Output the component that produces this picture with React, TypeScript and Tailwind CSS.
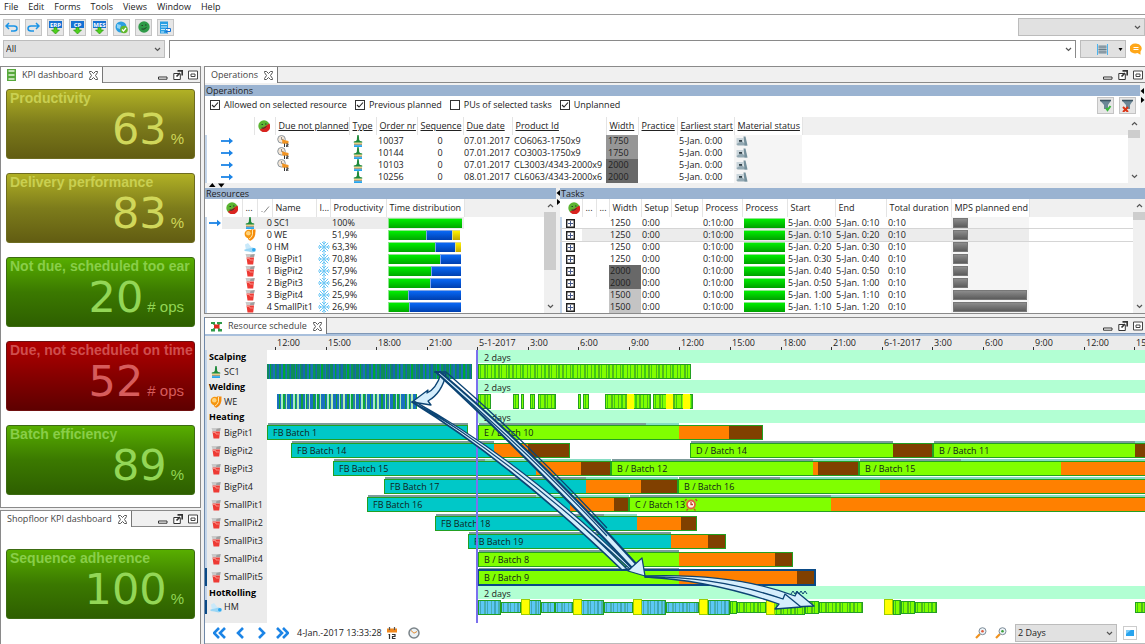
import React from 'react'

const menuItems = ['File', 'Edit', 'Forms', 'Tools', 'Views', 'Window', 'Help']

/* ---------- icons ---------- */

function BrushIcon() {
  return (
    <svg width="12" height="12" viewBox="0 0 12 12" className="block">
      <path d="M5.200 0.300q0.800-0.500 1.600 0l0.400 4.700q0.300 1 3 1.500v1.200h-8.400v-1.200q2.700-0.500 3-1.500z" fill="#1f8a3c" />
      <rect x="2" y="7.700" width="8" height="1.800" fill="#e9cf86" />
      <rect x="2" y="9.200" width="8" height="1" fill="#8a8a78" />
      <rect x="2" y="10.200" width="8" height="1.800" fill="#25a5ee" />
    </svg>
  )
}

function WeldIcon() {
  return (
    <svg width="12" height="12" viewBox="0 0 12 12" className="block">
      <path d="M7 0.500h4.500q0.500 9-5 11.200q-2.500-0.500-3-3.500z" fill="#f58a0b" />
      <circle cx="4.800" cy="5" r="4.200" fill="#f5960f" />
      <circle cx="4.300" cy="4.300" r="2.300" fill="#ffd27a" />
      <path d="M8.500 1v4.500q-0.500 3-3.500 4.500" stroke="#fff1c4" strokeWidth="0.900" fill="none" />
    </svg>
  )
}

function MillIcon() {
  return (
    <svg width="12" height="12" viewBox="0 0 12 12" className="block">
      <path d="M1 3.500l3-1.500l4 5l-1 3l-5-1z" fill="#c9e9fa" />
      <path d="M0.500 8.500q5-1 8-2l3 1v3l-3 1q-4-1.500-8-1.500z" fill="#9ad6f5" />
      <circle cx="9.800" cy="8.800" r="1.800" fill="#2fa8ee" />
    </svg>
  )
}

function PitIcon() {
  return (
    <svg width="12" height="12" viewBox="0 0 12 12" className="block">
      <path d="M1.500 1h9.500l-1 3.500h-7.500z" fill="#c9c9c9" />
      <path d="M6.500 2l4-1l-0.500 3h-4z" fill="#9f9f9f" />
      <path d="M2.500 4.500h7.500l-0.800 7h-5.700z" fill="#ee3a34" />
      <path d="M3 5.500h2.500l0.500 1.500h3" stroke="#f9a198" strokeWidth="0.800" fill="none" />
    </svg>
  )
}

function SnowIcon() {
  return (
    <svg width="12" height="12" viewBox="0 0 12 12" className="block" stroke="#6cc7f5" strokeWidth="1" fill="none">
      <path d="M6 0v12M0 6h12M1.800 1.800l8.400 8.400M10.200 1.800l-8.400 8.400M4 1l2 2l2-2M4 11l2-2l2 2M1 4l2 2l-2 2M11 4l-2 2l2 2" />
    </svg>
  )
}

function FaceIcon({ green = false }: { green?: boolean }) {
  return (
    <svg width="12" height="12" viewBox="0 0 12 12" className="block">
      <circle cx="6" cy="6" r="5.700" fill={green ? '#2f9a48' : '#5cb531'} />
      {!green && <path d="M11.300 3.500a5.700 5.700 0 0 1-9.500 6.300z" fill="#d9231f" />}
      <path d="M3.500 4.500h1.500M7 4h1.500M3.500 8q2.500 1 5-1.500" stroke="#26402a" strokeWidth="1" fill="none" />
    </svg>
  )
}

function ArrowIcon() {
  return (
    <svg width="12" height="12" viewBox="0 0 12 12" className="block">
      <path d="M0 6h9.500" stroke="#1b84e6" strokeWidth="1.800" />
      <path d="M8 2.800l4 3.200l-4 3.200z" fill="#1b84e6" />
    </svg>
  )
}

function DueIcon() {
  return (
    <svg width="12" height="12" viewBox="0 0 12 12" className="block">
      <circle cx="4.500" cy="4.300" r="3.800" fill="#f3e6d8" stroke="#8d979e" strokeWidth="1" />
      <path d="M4.500 2v2.500h2" stroke="#777" strokeWidth="0.800" fill="none" />
      <path d="M5 4.500l6.500 1.500v2.800h-6z" fill="#f29422" />
      <path d="M7.500 8.500v3.500M9.200 9h1.800v1.300h-1.500v1.500h2" stroke="#333" strokeWidth="1" fill="none" />
    </svg>
  )
}

function MaterialIcon() {
  return (
    <svg width="12" height="12" viewBox="0 0 12 12" className="block">
      <path d="M0.500 3h7v7h-7z" fill="#c8d4da" />
      <path d="M0.500 9l5-3l6 4.500h-10z" fill="#94a9b3" />
      <path d="M7.500 1.500h2l2 9h-3z" fill="#75909c" />
      <rect x="3" y="5" width="3" height="1.800" fill="#33424a" />
    </svg>
  )
}

function Calendar() {
  return (
    <svg width="12" height="12" viewBox="0 0 12 12" className="block">
      <rect x="1" y="1.500" width="10" height="4" fill="#f0871c" />
      <path d="M3.500 0v3M8.500 0v3" stroke="#555" strokeWidth="1.200" />
      <path d="M3.500 7v5M2.500 7.500h1M6 7.500h3v2h-2.500v2h3" stroke="#333" strokeWidth="1.200" fill="none" />
    </svg>
  )
}

function Clock() {
  return (
    <svg width="12" height="12" viewBox="0 0 12 12" className="block">
      <circle cx="6" cy="6" r="5" fill="#eaf1f5" stroke="#7b8489" strokeWidth="1.500" />
      <path d="M3 3.500l3 2.700l3-1.700" stroke="#e38a2e" strokeWidth="1" fill="none" />
    </svg>
  )
}

function SortIcon() {
  return (
    <svg width="9" height="9" viewBox="0 0 9 9" className="block" fill="none" stroke="#888">
      <path d="M0.500 7.500h1M3 8.500l5-6" />
    </svg>
  )
}

function Chevron({ up = false }: { up?: boolean }) {
  return (
    <svg width="7" height="5" viewBox="0 0 7 5" className="pointer-events-none block shrink-0" fill="none" stroke="#555" strokeWidth="1.200">
      <path d={up ? 'M1 4l2.500-2.500l2.500 2.500' : 'M1 1l2.500 2.500l2.500-2.500'} />
    </svg>
  )
}

function CloseGlyph() {
  return (
    <svg width="9" height="9" viewBox="0 0 9 9" className="block" fill="none" stroke="#555" strokeWidth="1">
      <path d="M0.500 0.500h2l2 2l2-2h2v1l-2 3l2 3v1h-2l-2-2l-2 2h-2v-1l2-3l-2-3z" />
    </svg>
  )
}

function SplitArrows({ vertical = false }: { vertical?: boolean }) {
  return vertical ? (
    <svg width="6" height="16" viewBox="0 0 6 16" className="block">
      <path d="M4 0v6l-3.500-3z" />
      <path d="M1 9v6l3.500-3z" />
    </svg>
  ) : (
    <svg width="16" height="5" viewBox="0 0 16 5" className="block">
      <path d="M0 4h6.500l-3.200-4z" />
      <path d="M9 0.500h6.500l-3.200 4z" />
    </svg>
  )
}

/* ---------- panel chrome ---------- */

interface PanelHeaderProps {
  title: string
  icon?: React.ReactNode
  blue?: boolean
}

function PanelHeader({ title, icon, blue = false }: PanelHeaderProps) {
  return (
    <div className="flex h-[17px] border-t border-[#8a8a8a] bg-[#f0f0f0]">
      <div className="flex items-center gap-1.5 border-r border-[#777] bg-white pr-1 pl-1.5">
        {icon}
        <span className="text-[#444]">{title}</span>
        <button aria-label={'Close ' + title}><CloseGlyph /></button>
      </div>
      <div className={`flex flex-1 items-center justify-end gap-[5px] border-b pr-0.5 ${blue ? 'border-[#7f97b5]' : 'border-[#8a8a8a]'}`}>
        <button aria-label="Minimize">
          <svg width="10" height="10" viewBox="0 0 10 10" className="block"><path d="M0.500 7h8.500v2.200h-8.500z" fill="#fff" stroke="#333" /></svg>
        </button>
        <button aria-label="Detach">
          <svg width="10" height="10" viewBox="0 0 10 10" className="block" fill="#fff" stroke="#333">
            <path d="M0.800 3.500h6.500v6h-6.500z" />
            <path d="M3.500 6.500l3.500-3.500M4.500 0.800h4.700v4.700" strokeWidth="1.700" />
          </svg>
        </button>
        <button aria-label="Maximize">
          <svg width="10" height="10" viewBox="0 0 10 10" className="block" fill="#fff" stroke="#444"><path d="M0.500 1h9v8h-9z" /><path d="M3 4h4v2.500h-4z" /></svg>
        </button>
      </div>
    </div>
  )
}

function Scrollbar({ thumb }: { thumb: string }) {
  return (
    <div className="flex w-3 shrink-0 flex-col items-center bg-[#f0f0f0] py-1">
      <Chevron up />
      <div className={`mt-1 w-3 bg-[#cdcdcd] ${thumb}`} />
      <div className="flex-1" />
      <Chevron />
    </div>
  )
}

/* ---------- KPI tiles ---------- */

const tones = {
  olive: 'from-[#b1b125] via-[#7d7c1b] to-[#625d12] border-[#6d6c20] text-[#d0d75a]',
  green: 'from-[#58ae00] via-[#3b7900] to-[#2e5f00] border-[#3c6b12] text-[#93d656]',
  red: 'from-[#b20000] via-[#860000] to-[#5e0000] border-[#701010] text-[#d65c5c]',
}

interface KpiTileProps {
  title: string
  value: string
  unit: string
  tone: keyof typeof tones
}

function KpiTile({ title, value, unit, tone }: KpiTileProps) {
  return (
    <div className={`h-[70px] overflow-hidden rounded-[3px] border bg-linear-to-b font-['Liberation_Sans',sans-serif] whitespace-nowrap ${tones[tone]}`}>
      <h2 className="pl-[3px] text-[14px] leading-4 font-bold opacity-85">{title}</h2>
      <p className="flex items-baseline justify-end gap-1 pr-[10px]">
        <span className="font-['DejaVu_Sans',sans-serif] text-[43px] leading-[46px]">{value}</span>
        <span className="text-[15px]">{unit}</span>
      </p>
    </div>
  )
}

/* ---------- tables ---------- */

interface Column {
  label: React.ReactNode
  width: number
}

function TableHead({ columns, underlined = false }: { columns: Column[]; underlined?: boolean }) {
  return (
    <>
      <colgroup>
        {columns.map((c, i) => <col key={i} style={{ width: c.width }} />)}
        <col />
      </colgroup>
      <thead>
        <tr className="h-[18px]">
          {columns.map((c, i) => (
            <th key={i} className={`border-r border-[#e4e4e4] bg-white p-0 pl-[3px] text-left font-normal ${underlined ? 'underline' : ''}`}>
              {c.label}
            </th>
          ))}
          <th className="bg-[#f0f0f0]" />
        </tr>
      </thead>
    </>
  )
}

const operationColumns: Column[] = [
  { label: '', width: 48 },
  { label: <FaceIcon />, width: 21 },
  { label: 'Due not planned', width: 74 },
  { label: 'Type', width: 27 },
  { label: 'Order nr', width: 41 },
  { label: 'Sequence', width: 46 },
  { label: 'Due date', width: 49 },
  { label: 'Product Id', width: 94 },
  { label: 'Width', width: 32 },
  { label: 'Practice', width: 39 },
  { label: 'Earliest start', width: 57 },
  { label: 'Material status', width: 68 },
]

const operations = [
  { due: true, order: '10037', date: '07.01.2017', product: 'CO6063-1750x9', width: '1750' },
  { due: true, order: '10144', date: '07.01.2017', product: 'CO3003-1750x9', width: '1750' },
  { due: true, order: '10103', date: '07.01.2017', product: 'CL3003/4343-2000x9', width: '2000' },
  { due: false, order: '10256', date: '08.01.2017', product: 'CL6063/4343-2000x6', width: '2000' },
]

const widthShade: Record<string, string> = {
  '1250': '',
  '1500': 'bg-[#c4c4c4]',
  '1750': 'bg-[#969696]',
  '2000': 'bg-[#686868]',
}

function OperationsTable() {
  return (
    <table className="w-full table-fixed border-collapse whitespace-nowrap">
      <TableHead columns={operationColumns} underlined />
      <tbody>
        {operations.map((o) => (
          <tr key={o.order} className="h-3 *:p-0">
            <td className="border-l-2 border-[#c3d5ea]"><div className="pl-3.5"><ArrowIcon /></div></td>
            <td />
            <td><div className="pl-0.5">{o.due && <DueIcon />}</div></td>
            <td><div className="pl-[3px]"><BrushIcon /></div></td>
            <td><div className="pl-0.5">{o.order}</div></td>
            <td className="text-center">0</td>
            <td><div className="pl-px">{o.date}</div></td>
            <td><div className="pl-0.5">{o.product}</div></td>
            <td className={widthShade[o.width]}><div className="pl-0.5">{o.width}</div></td>
            <td />
            <td><div className="pl-0.5">5-Jan. 0:00</div></td>
            <td className="bg-[#f5f5f5]"><div className="pl-0.5"><MaterialIcon /></div></td>
            <td />
          </tr>
        ))}
      </tbody>
    </table>
  )
}

const resourceColumns: Column[] = [
  { label: '', width: 16 },
  { label: <FaceIcon />, width: 20 },
  { label: '...', width: 15 },
  { label: <SortIcon />, width: 15 },
  { label: 'Name', width: 44 },
  { label: 'I...', width: 14 },
  { label: 'Productivity', width: 56 },
  { label: 'Time distribution', width: 78 },
]

const resources = [
  { icon: <BrushIcon />, nr: 0, name: 'SC1', snow: false, productivity: '100%', bars: [74, 0, 0] },
  { icon: <WeldIcon />, nr: 0, name: 'WE', snow: false, productivity: '51,9%', bars: [38, 26, 8] },
  { icon: <MillIcon />, nr: 0, name: 'HM', snow: true, productivity: '63,3%', bars: [47, 20, 6] },
  { icon: <PitIcon />, nr: 0, name: 'BigPit1', snow: true, productivity: '70,8%', bars: [52, 21, 0] },
  { icon: <PitIcon />, nr: 1, name: 'BigPit2', snow: true, productivity: '57,9%', bars: [43, 30, 0] },
  { icon: <PitIcon />, nr: 2, name: 'BigPit3', snow: true, productivity: '56,2%', bars: [42, 31, 0] },
  { icon: <PitIcon />, nr: 3, name: 'BigPit4', snow: true, productivity: '25,9%', bars: [20, 53, 0] },
  { icon: <PitIcon />, nr: 4, name: 'SmallPit1', snow: true, productivity: '26,9%', bars: [21, 52, 0] },
]

const barTones = [
  'bg-linear-to-b from-[#00ee00] to-[#00a800] border-[#8de58d]',
  'bg-linear-to-b from-[#0a68f5] to-[#003fb0] border-[#7fa5e5]',
  'bg-linear-to-b from-[#fff200] to-[#c4a800] border-[#e5dd7f]',
]

function ResourcesTable() {
  return (
    <table className="w-full table-fixed border-collapse whitespace-nowrap">
      <TableHead columns={resourceColumns} />
      <tbody>
        {resources.map((r, i) => (
          <tr key={r.name} className={`h-3 *:p-0 ${i === 0 ? 'bg-[#ececec]' : ''}`}>
            <td className="border-l-2 border-[#c3d5ea] bg-white">{i === 0 && <div className="pl-0.5"><ArrowIcon /></div>}</td>
            <td />
            <td><div className="pl-0.5">{r.icon}</div></td>
            <td className="text-right">{r.nr}</td>
            <td><div className="pl-0.5">{r.name}</div></td>
            <td><div className="pl-0.5">{r.snow && <SnowIcon />}</div></td>
            <td><div className="pl-0.5">{r.productivity}</div></td>
            <td>
              <div className="flex pl-0.5">
                {r.bars.map((w, b) => w > 0 && (
                  <div key={b} className={`h-2.5 border-t border-l ${barTones[b]}`} style={{ width: w }} />
                ))}
              </div>
            </td>
            <td className="bg-white" />
          </tr>
        ))}
      </tbody>
    </table>
  )
}

const taskColumns: Column[] = [
  { label: <div className="pl-1"><FaceIcon /></div>, width: 21 },
  { label: '...', width: 14 },
  { label: '...', width: 13 },
  { label: 'Width', width: 32 },
  { label: 'Setup', width: 30 },
  { label: 'Setup', width: 31 },
  { label: 'Process', width: 40 },
  { label: 'Process', width: 45 },
  { label: 'Start', width: 48 },
  { label: 'End', width: 51 },
  { label: 'Total duration', width: 65 },
  { label: 'MPS planned end', width: 78 },
]

const tasks = [
  { width: '1250', start: '0:00', end: '0:10', mps: 15 },
  { width: '1250', start: '0:10', end: '0:20', mps: 15 },
  { width: '1250', start: '0:20', end: '0:30', mps: 15 },
  { width: '1250', start: '0:30', end: '0:40', mps: 15 },
  { width: '2000', start: '0:40', end: '0:50', mps: 15 },
  { width: '2000', start: '0:50', end: '1:00', mps: 15 },
  { width: '1500', start: '1:00', end: '1:10', mps: 74 },
  { width: '1500', start: '1:10', end: '1:20', mps: 74 },
]

function TasksTable() {
  return (
    <table className="w-full table-fixed border-collapse whitespace-nowrap">
      <TableHead columns={taskColumns} />
      <tbody>
        {tasks.map((t, i) => (
          <tr key={t.start} className={`h-3 *:p-0 ${i === 1 ? 'bg-[#ececec] outline outline-[#d5d5d5]' : ''}`}>
            <td className="border-l-2 border-[#c3d5ea] bg-white">
              <button aria-label={'Expand task ' + t.start} className="ml-1 block">
                <svg width="9" height="9" viewBox="0 0 9 9" className="block"><path d="M0.700 0.700h7.600v7.600h-7.600z" fill="#fff" stroke="#222" strokeWidth="1.400" /><path d="M2 4.500h5M4.500 2v5" stroke="#44588a" /></svg>
              </button>
            </td>
            <td />
            <td />
            <td className={widthShade[t.width]}><div className="pl-px">{t.width}</div></td>
            <td><div className="pl-px">0:00</div></td>
            <td />
            <td><div className="pl-px">0:10:00</div></td>
            <td><div className="mr-0.5 ml-0.5 h-2.5 border-t border-[#8de58d] bg-linear-to-b from-[#00ee00] to-[#00a000]" /></td>
            <td><div className="pl-px">5-Jan. {t.start}</div></td>
            <td><div className="pl-px">5-Jan. {t.end}</div></td>
            <td><div className="pl-0.5">0:10</div></td>
            <td className={i === 1 ? '' : 'bg-[#f5f5f5]'}>
              <div className="ml-0.5 h-2.5 border border-[#777] bg-linear-to-b from-[#8c8c8c] to-[#5c5c5c]" style={{ width: t.mps }} />
            </td>
            <td className="bg-white" />
          </tr>
        ))}
      </tbody>
    </table>
  )
}

/* ---------- schedule ---------- */

const TEAL = '#00c8c8'
const GREEN = '#80ff00'
const ORANGE = '#ff8000'
const BROWN = '#804000'
const EDGE = '#22a022'

const scheduleRows = [
  { name: 'Scalping', group: true, h: 'h-[13px]' },
  { name: 'SC1', icon: <BrushIcon />, h: 'h-[17px]' },
  { name: 'Welding', group: true, h: 'h-[13px]' },
  { name: 'WE', icon: <WeldIcon />, h: 'h-[17px]' },
  { name: 'Heating', group: true, h: 'h-[14px]' },
  { name: 'BigPit1', icon: <PitIcon />, h: 'h-[18px]' },
  { name: 'BigPit2', icon: <PitIcon />, h: 'h-[18px]' },
  { name: 'BigPit3', icon: <PitIcon />, h: 'h-[18px]' },
  { name: 'BigPit4', icon: <PitIcon />, h: 'h-[18px]' },
  { name: 'SmallPit1', icon: <PitIcon />, h: 'h-[18px]' },
  { name: 'SmallPit2', icon: <PitIcon />, h: 'h-[18px]' },
  { name: 'SmallPit3', icon: <PitIcon />, h: 'h-[18px]' },
  { name: 'SmallPit4', icon: <PitIcon />, h: 'h-[18px]' },
  { name: 'SmallPit5', icon: <PitIcon />, h: 'h-[18px]', selected: true },
  { name: 'HotRolling', group: true, h: 'h-[14px]' },
  { name: 'HM', icon: <MillIcon />, h: 'h-[14px]', selected: true },
]

const ticks = [
  '12:00', '15:00', '18:00', '21:00', '5-1-2017', '3:00', '6:00', '9:00', '12:00',
  '15:00', '18:00', '21:00', '6-1-2017', '3:00', '6:00', '9:00', '12:00', '15:00',
]

interface Batch {
  y: number
  x: number
  label?: string
  // end position and colour of every phase
  phases: [number, string][]
  // queue strip drawn above the bar: end of the dark and of the light part
  strip?: [number, number]
}

const batches: Batch[] = [
  { y: 89, x: 0, label: 'FB Batch 1', phases: [[201, TEAL]], strip: [201, 201] },
  { y: 89, x: 211, label: 'E / Batch 10', phases: [[412, GREEN], [462, ORANGE], [496, BROWN]], strip: [379, 412] },
  { y: 107, x: 24, label: 'FB Batch 14', phases: [[227, TEAL], [261, ORANGE], [303, BROWN]], strip: [227, 227] },
  { y: 107, x: 423, label: 'D / Batch 14', phases: [[626, GREEN], [666, BROWN]], strip: [626, 626] },
  { y: 107, x: 666, label: 'B / Batch 11', phases: [[868, GREEN], [1400, BROWN]], strip: [868, 1400] },
  { y: 125, x: 66, label: 'FB Batch 15', phases: [[269, TEAL], [314, ORANGE], [344, BROWN]], strip: [218, 344] },
  { y: 125, x: 344, label: 'B / Batch 12', phases: [[546, GREEN], [551, ORANGE], [592, BROWN]], strip: [546, 592] },
  { y: 125, x: 592, label: 'B / Batch 15', phases: [[794, GREEN], [1400, ORANGE]], strip: [694, 1400] },
  { y: 143, x: 117, label: 'FB Batch 17', phases: [[319, TEAL], [374, ORANGE], [411, BROWN]], strip: [319, 411] },
  { y: 143, x: 411, label: 'B / Batch 16', phases: [[613, GREEN], [1400, ORANGE]], strip: [513, 1400] },
  { y: 161, x: 100, label: 'FB Batch 16', phases: [[303, TEAL], [347, ORANGE], [362, BROWN]], strip: [269, 362] },
  { y: 161, x: 362, label: 'C / Batch 13', phases: [[564, GREEN], [1400, ORANGE]], strip: [564, 1400] },
  { y: 180, x: 168, label: 'FB Batch 18', phases: [[370, TEAL], [414, ORANGE], [430, BROWN]], strip: [337, 370] },
  { y: 198, x: 201, label: 'FB Batch 19', phases: [[404, TEAL], [441, ORANGE], [459, BROWN]], strip: [404, 404] },
  { y: 216, x: 211, label: 'B / Batch 8', phases: [[412, GREEN], [508, ORANGE], [526, BROWN]], strip: [412, 412] },
  { y: 234, x: 211, label: 'B / Batch 9', phases: [[412, GREEN], [530, ORANGE], [548, BROWN]], strip: [412, 412] },
]

function BatchBar({ batch }: { batch: Batch }) {
  const { x, y, phases, label, strip } = batch
  const end = phases[phases.length - 1][0]
  return (
    <g>
      {strip && <rect x={x + 1} y={y - 2} width={strip[0] - x - 1} height="2" fill="#7d9c9c" />}
      {strip && <rect x={strip[0]} y={y - 2} width={strip[1] - strip[0]} height="2" fill="#86dcc4" />}
      {phases.map(([stop, color], i) => {
        const from = i === 0 ? x : phases[i - 1][0]
        return <rect key={stop} x={from} y={y} width={stop - from} height="15" fill={color} />
      })}
      <rect x={x + 0.5} y={y + 0.5} width={end - x - 1} height="14" fill="none" stroke={EDGE} />
      <text x={x + 6} y={y + 11} fill="#10241a">{label}</text>
    </g>
  )
}

interface StripesProps {
  x: number
  end: number
  y: number
  h: number
  colors: string[]
  outline?: boolean
}

// many short operations side by side, each one a thin vertical stripe
function Stripes({ x, end, y, h, colors, outline = true }: StripesProps) {
  const parts = []
  let pos = x
  let i = 0
  while (pos < end) {
    const w = Math.min([2, 1, 2, 1, 1, 2, 1][(i * 3) % 7], end - pos)
    parts.push(<rect key={i} x={pos} y={y} width={w} height={h} fill={colors[i % colors.length]} />)
    pos += w
    i++
  }
  return (
    <g>
      {parts}
      {outline && <rect x={x + 0.5} y={y + 0.5} width={end - x - 1} height={h - 1} fill="none" stroke={EDGE} />}
    </g>
  )
}

const LIME = ['#80ff00', '#3fc814', '#80ff00', '#80ff00', '#4fb81c']
const BLUES = ['#0e8a5c', '#1a70b8', '#00a834', '#157a8a', '#1a70b8', '#0a9a50', '#13787c', '#1668b0', '#0c8f58']
const WELDS = ['#1a70c0', '#12a03a', '#1a70c0', '#a8ecc4', '#0aa83c', '#2a78b0', '#b4f0b0', '#1a70c0']
const SKY = ['#5cc8f5', '#3fa6b8', '#5cc8f5', '#5cc8f5', '#48b0b0']

const lateWelds = [[211, 224], [246, 252], [254, 257], [263, 268], [271, 289], [311, 314], [316, 322], [338, 384], [386, 426]]
const rolling: [number, number, number, string[]][] = [
  [211, 234, 15, SKY], [234, 254, 11, SKY], [262, 274, 15, SKY], [274, 288, 11, SKY], [288, 306, 11, SKY],
  [314, 337, 15, SKY], [337, 366, 11, SKY], [374, 399, 15, SKY], [399, 432, 11, SKY], [441, 463, 15, SKY],
  [463, 470, 13, LIME], [470, 499, 11, LIME], [507, 538, 15, LIME], [538, 552, 13, LIME], [552, 596, 11, LIME],
  [626, 634, 15, LIME], [634, 648, 13, LIME], [648, 670, 11, LIME], [868, 900, 11, LIME],
]
const yellows = [254, 306, 366, 432, 499, 617]

function ScheduleChart() {
  return (
    <svg width="100%" height="287" className="block text-[9px]" fill="#222" role="img" aria-label="Resource schedule">
      <rect width="100%" height="14" fill="#ebebeb" />
      {ticks.map((t, i) => {
        const x = Math.round(8 + i * 50.55)
        return (
          <g key={i}>
            <rect x={x} y="11" width="1" height="3" fill="#333" />
            <text x={x + 2} y="10">{t}</text>
          </g>
        )
      })}
      {[14, 44, 74, 250].map((y) => (
        <g key={y}>
          <rect x="211" y={y} width="100%" height="13" fill="#b2ffd3" />
          <text x="217" y={y + 11}>2 days</text>
        </g>
      ))}

      <Stripes x={0} end={205} y={28} h={15} colors={BLUES} outline={false} />
      <Stripes x={211} end={424} y={28} h={15} colors={LIME} />
      <Stripes x={10} end={150} y={58} h={15} colors={WELDS} outline={false} />
      {lateWelds.map(([a, b]) => <Stripes key={a} x={a} end={b} y={58} h={15} colors={LIME} />)}
      {[360, 399, 416].map((x) => <rect key={x} x={x} y="58" width="7" height="15" fill="#ffff00" />)}

      {batches.map((b) => <BatchBar key={b.x + '-' + b.y} batch={b} />)}
      <rect x="211" y="234" width="337" height="15" fill="none" stroke="#0b4a86" strokeWidth="2" />
      <g>
        <circle cx="424" cy="168.500" r="4" fill="#fdf5ec" stroke="#e0603c" strokeWidth="1.800" />
        <path d="M424 166v2.500h2M419.500 163l-1.500 2M428.500 163l1.500 2M421 173l-1.500 1.500M427 173l1.500 1.500" stroke="#c0452c" strokeWidth="1.300" fill="none" />
      </g>

      {rolling.map(([a, b, h, colors]) => (
        <Stripes key={a} x={a} end={b} y={Math.round(271 - h / 2)} h={h} colors={colors} />
      ))}
      {yellows.map((x) => (
        <rect key={x} x={x + 0.5} y="263.500" width="8" height="15" fill="#ffff00" stroke="#9ccc00" />
      ))}

      <rect x="209" y="14" width="2" height="273" fill="#7b70ee" />

      {/* material flow of the selected order */}
      <g fill="#d5eefc" stroke="#0c4474" strokeWidth="1.300" strokeLinejoin="round">
        <path d="M174 38q-5 15-14 19l1-3l-16 12l19 3l-3-4q14-8 18-27z" />
        <path d="M145 66Q248 120 360 233l-5 1Q243 126 145 66z" strokeWidth="1.600" />
        <path d="M147 65Q254 124 366 233l-2 1Q248 126 147 65z" strokeWidth="1.200" />
        <path d="M169 36l4 0Q268 116 371 230l-5 3Q262 122 169 36z" strokeWidth="2.200" />
        <path d="M167 36h12Q262 108 340 192" fill="none" strokeWidth="1.300" />
        <path d="M171 38Q266 120 340 200" fill="none" strokeWidth="1.200" />
        <path d="M365 231l10-9l3 18l-17-5z" />
        <path d="M378 240q90-3 150 20l2-4l17 14l-21 1l2-3q-60-24-150-27z" />
        <path d="M378 241q70-1 138 22l2-5l16 13l-26 2l4-5q-70-24-134-27z" />
      </g>
      <path d="M524 258l2-3l2 3l2-3l2 3l2-3l2 3l2-3l2 3" fill="none" stroke="#0c4474" />
    </svg>
  )
}

function SchedulePanel() {
  return (
    <section className="flex flex-1 flex-col border-l border-[#6f88a8] bg-white">
      <PanelHeader
        blue
        title="Resource schedule"
        icon={
          <svg width="11" height="11" viewBox="0 0 11 11" className="block">
            <path d="M0 1h4v2h-4zM6 1h5v2h-5zM0 8h4v2.500h-4zM7 8h4v2.500h-4z" fill="#2f9a48" />
            <path d="M1.500 2l8 7M9.500 2l-8 7" stroke="#2f9a48" strokeWidth="1.200" />
            <path d="M3 3.500h5.500v4h-5.500z" fill="#e02a20" />
          </svg>
        }
      />
      <div className="flex border-t-2 border-[#a9c0dc]">
        <div className="w-[62px] shrink-0 bg-[#ebebeb] pt-[14px]">
          {scheduleRows.map((r) => (
            <div
              key={r.name}
              className={`flex items-center border-l-2 ${r.h} ${r.selected ? 'border-[#0b4a86]' : 'border-[#c3d5ea]'} ${r.group ? 'pl-0.5 font-bold text-black' : 'gap-0.5 pl-[3px]'}`}
            >
              {r.icon && <span className="shrink-0">{r.icon}</span>}
              <span>{r.name}</span>
            </div>
          ))}
        </div>
        <div className="min-w-0 flex-1 overflow-hidden"><ScheduleChart /></div>
      </div>
      <footer className="flex flex-1 items-center border-b border-[#bbb] pr-1 pl-2">
        {['M6 1l-5 5l5 5M12 1l-5 5l5 5', 'M9 1l-5 5l5 5', 'M4 1l5 5l-5 5', 'M1 1l5 5l-5 5M7 1l5 5l-5 5'].map((d, i) => (
          <button key={d} aria-label={['Far back', 'Back', 'Forward', 'Far forward'][i]} className="mr-2">
            <svg width="13" height="12" viewBox="0 0 13 12" className="block" fill="none" stroke="#1b84e6" strokeWidth="2.600"><path d={d} /></svg>
          </button>
        ))}
        <span>4-Jan.-2017 13:33:28</span>
        <button aria-label="Pick date" className="ml-1"><Calendar /></button>
        <button aria-label="Pick time" className="ml-2.5"><Clock /></button>
        <div className="flex-1" />
        {['#e05a3c', '#3ca03c'].map((c) => (
          <button key={c} aria-label="Zoom" className="mr-2">
            <svg width="12" height="12" viewBox="0 0 12 12" className="block" fill="none">
              <path d="M1 11l4-4" stroke="#f0921e" strokeWidth="2.200" />
              <circle cx="7.500" cy="4.200" r="3.500" fill="#eef4f8" stroke="#7d8c98" strokeWidth="1" />
              <circle cx="7.500" cy="4.200" r="1.300" fill={c} />
            </svg>
          </button>
        ))}
        <div className="grid w-[102px] items-center *:col-start-1 *:row-start-1">
          <select aria-label="Visible period" className="h-[18px] appearance-none border border-[#bcbcbc] bg-[#e1e1e1] pl-0.5">
            <option>2 Days</option>
          </select>
          <span className="mr-1 justify-self-end"><Chevron /></span>
        </div>
        <button aria-label="Fit" className="mr-1 ml-1.5 border border-[#ccc] bg-white p-0.5">
          <svg width="8" height="8" viewBox="0 0 8 8" className="block"><path d="M0 1h8v6h-8z" fill="#29a4ee" /><path d="M0 5l5-4h-5z" fill="#7cccf8" /></svg>
        </button>
      </footer>
    </section>
  )
}

/* ---------- toolbar ---------- */

function ImportIcon({ label }: { label: string }) {
  return (
    <svg width="13" height="13" viewBox="0 0 13 13" className="block">
      <rect x="0" y="0" width="13" height="7" fill="#1672d4" />
      <text x="6.500" y="6" fontSize="6" fontWeight="bold" fill="#fff" textAnchor="middle">{label}</text>
      <path d="M5 6.500h3v2.500h2.500l-4 4l-4-4h2.500z" fill="#4fd01c" stroke="#238a10" strokeWidth="0.600" />
    </svg>
  )
}

const tools = [
  { name: 'Undo', icon: <svg width="13" height="13" viewBox="0 0 13 13" fill="none" stroke="#1b94e6" strokeWidth="1.500"><path d="M4 2l-3 3l3 3M1 5h8q3 0 3 2.500t-3 2.500h-3" /></svg> },
  { name: 'Redo', icon: <svg width="13" height="13" viewBox="0 0 13 13" fill="none" stroke="#1b94e6" strokeWidth="1.500"><path d="M9 2l3 3l-3 3M12 5h-8q-3 0-3 2.500t3 2.500h3" /></svg> },
  { name: 'Import ERP', icon: <ImportIcon label="ERP" /> },
  { name: 'Import CP', icon: <ImportIcon label="CP" /> },
  { name: 'Import MES', icon: <ImportIcon label="MES" /> },
  { name: 'Check', icon: <svg width="13" height="13" viewBox="0 0 13 13"><circle cx="6" cy="6" r="5.500" fill="#2a9fe2" /><path d="M2 3l4 1l-1 4l-3-1z" fill="#8fd3f5" /><circle cx="9" cy="8.500" r="3.800" fill="#62b82e" /><path d="M7 8.500l1.500 1.500l2.500-3" stroke="#fff" strokeWidth="1.200" fill="none" /></svg> },
  { name: 'Status', icon: <FaceIcon green /> },
  { name: 'Report', icon: <svg width="13" height="13" viewBox="0 0 13 13"><path d="M1 0.500h8v12h-8z" fill="#2a9fe2" /><path d="M2 3.500h6M2 6h6M2 8.500h4M2 11h3" stroke="#c7e8fb" /><path d="M7 7.500h4.500v3h-4.500M8.500 9l-2 1.500l2 1.500" stroke="#1672d4" fill="#fff" /></svg> },
]

function Toolbar() {
  return (
    <>
      <div className="flex items-center gap-[5px] pt-[3px] pl-[3px]">
        {tools.map((t) => (
          <button key={t.name} aria-label={t.name} className="flex size-[17px] items-center justify-center border border-[#c4c4c4] bg-[#e6e6e6]">
            {t.icon}
          </button>
        ))}
        <div className="ml-auto grid w-[127px] items-center *:col-start-1 *:row-start-1">
          <select aria-label="Scenario" className="h-[18px] w-full appearance-none border border-[#bcbcbc] bg-[#e1e1e1]" />
          <span className="mr-1 justify-self-end"><Chevron /></span>
        </div>
      </div>
      <div className="flex items-center gap-1 pt-1 pr-[3px] pb-2 pl-[3px]">
        <div className="grid w-[162px] items-center *:col-start-1 *:row-start-1">
          <select aria-label="Filter scope" className="h-[18px] appearance-none border border-[#bcbcbc] bg-[#e1e1e1] pl-0.5">
            <option>All</option>
          </select>
          <span className="mr-1 justify-self-end"><Chevron /></span>
        </div>
        <div className="grid flex-1 items-center *:col-start-1 *:row-start-1">
          <input aria-label="Filter" className="h-[18px] border border-b-0 border-[#8a8a8a] bg-white px-1" />
          <span className="mr-1 justify-self-end"><Chevron /></span>
        </div>
        <button aria-label="Layout" className="flex h-[18px] w-[46px] items-center justify-end gap-2.5 border border-[#bcbcbc] bg-[#e1e1e1] pr-0.5">
          <svg width="11" height="11" viewBox="0 0 11 11"><path d="M0.500 0v11M10.500 0v11" stroke="#4cb4ee" /><path d="M1.500 1h8v9h-8z" fill="#a8b6be" /><path d="M1.500 3h8M1.500 5.500h8M1.500 8h8" stroke="#6c7f8a" /></svg>
          <svg width="5" height="3" viewBox="0 0 5 3"><path d="M0.500 0h4l-2 3z" /></svg>
        </button>
        <button aria-label="Messages">
          <svg width="12" height="12" viewBox="0 0 12 12" className="block"><path d="M6 0.500a5.700 5 0 0 1 4.500 8v3.300l-3-1.800a5.700 5 0 1 1-1.500-9.500z" fill="#ffa71a" /><path d="M3.500 4.500h5M3.500 6.500h5" stroke="#fff" strokeWidth="1" /></svg>
        </button>
      </div>
    </>
  )
}

/* ---------- operations ---------- */

const filters = [
  { id: 'allowed', label: 'Allowed on selected resource', on: true },
  { id: 'previous', label: 'Previous planned', on: true },
  { id: 'pus', label: 'PUs of selected tasks', on: false },
  { id: 'unplanned', label: 'Unplanned', on: true },
]

function Band({ title }: { title: string }) {
  return <h3 className="h-[11px] bg-[#9ab3d1] pl-px leading-[11px]">{title}</h3>
}

function OperationsPanel() {
  return (
    <section className="border-b border-l border-[#8a8a8a] bg-[#f0f0f0]">
      <PanelHeader title="Operations" />
      <div className="flex pt-0.5">
        <div className="min-w-0 flex-1">
          <Band title="Operations" />
          <div className="flex h-[21px] items-center gap-2 bg-white pr-1 pb-[3px] pl-[5px]">
            {filters.map((f) => (
              <div key={f.id} className="flex items-center gap-1">
                <span className="grid *:col-start-1 *:row-start-1">
                  <input id={f.id} type="checkbox" defaultChecked={f.on} className="peer size-[10px] appearance-none border border-[#333] bg-white" />
                  <svg width="10" height="10" viewBox="0 0 10 10" className="pointer-events-none hidden peer-checked:block" fill="none" stroke="#222" strokeWidth="1.100"><path d="M2 5l2 2l4-4.500" /></svg>
                </span>
                <label htmlFor={f.id}>{f.label}</label>
              </div>
            ))}
            <div className="flex-1" />
            <div className="flex gap-[5px]">
              {['M7 9l1.500 2l3-4', 'M2 8l5 5M7 8l-5 5'].map((d, i) => (
                <button key={d} aria-label={i ? 'Clear filter' : 'Apply filter'} className="flex size-[17px] items-center justify-center border border-[#c4c4c4] bg-[#e6e6e6]">
                  <svg width="13" height="13" viewBox="0 0 13 13" fill="none">
                    <path d="M1 1.500h11l-3 4.500v4h-4v-4z" fill="#6b8797" />
                    <path d="M1 1.500h11" stroke="#3d5563" strokeWidth="1.500" />
                    <path d={d} stroke={i ? '#dc3414' : '#38b83c'} strokeWidth="2" />
                  </svg>
                </button>
              ))}
            </div>
          </div>
          <div className="flex bg-white">
            <div className="min-w-0 flex-1"><OperationsTable /></div>
            <Scrollbar thumb="h-2" />
          </div>
        </div>
        <div className="w-[5px] pt-[3px]"><SplitArrows vertical /></div>
      </div>
      <div className="h-[5px] pl-1"><SplitArrows /></div>
      <div className="flex">
        <div className="w-[351px] shrink-0">
          <Band title="Resources" />
          <div className="flex bg-white">
            <div className="min-w-0 flex-1"><ResourcesTable /></div>
            <Scrollbar thumb="h-[58px]" />
          </div>
        </div>
        <div className="w-1 overflow-hidden pt-0.5"><SplitArrows vertical /></div>
        <div className="min-w-0 flex-1">
          <Band title="Tasks" />
          <div className="flex bg-white">
            <div className="min-w-0 flex-1"><TasksTable /></div>
            <Scrollbar thumb="h-2" />
          </div>
        </div>
      </div>
    </section>
  )
}

export default function App() {
  return (
    <div className="flex min-h-screen w-full flex-col overflow-hidden bg-white font-['Open_Sans','Noto_Sans',sans-serif] text-[9px] leading-3 text-[#222]">
      <nav className="flex h-[15px] items-center gap-2.5 border-b border-[#9a9a9a] pl-1">
        {menuItems.map((m) => <button key={m}>{m}</button>)}
      </nav>
      <Toolbar />
      <div className="flex flex-1 gap-[3px] bg-[#f0f0f0]">
        <aside className="flex w-[201px] shrink-0 flex-col gap-0.5">
          <section className="border-x border-b border-[#8a8a8a] bg-white">
            <PanelHeader
              title="KPI dashboard"
              icon={
                <svg width="9" height="12" viewBox="0 0 9 12" className="block">
                  <path d="M0 0h9v12h-9z" fill="#57a83c" />
                  <path d="M1.500 2h6M1.500 6h6M1.500 10h6" stroke="#e2f5d8" strokeWidth="1.500" />
                </svg>
              }
            />
            <div className="flex flex-col gap-[14px] px-[5px] pt-1.5 pb-3">
              <KpiTile title="Productivity" value="63" unit="%" tone="olive" />
              <KpiTile title="Delivery performance" value="83" unit="%" tone="olive" />
              <KpiTile title="Not due, scheduled too ear" value="20" unit="# ops" tone="green" />
              <KpiTile title="Due, not scheduled on time" value="52" unit="# ops" tone="red" />
              <KpiTile title="Batch efficiency" value="89" unit="%" tone="green" />
            </div>
          </section>
          <section className="flex-1 border-x border-[#8a8a8a] bg-white">
            <PanelHeader title="Shopfloor KPI dashboard" />
            <div className="px-[5px] pt-[22px]">
              <KpiTile title="Sequence adherence" value="100" unit="%" tone="green" />
            </div>
          </section>
        </aside>
        <main className="flex min-w-0 flex-1 flex-col gap-[3px]">
          <OperationsPanel />
          <SchedulePanel />
        </main>
      </div>
    </div>
  )
}
